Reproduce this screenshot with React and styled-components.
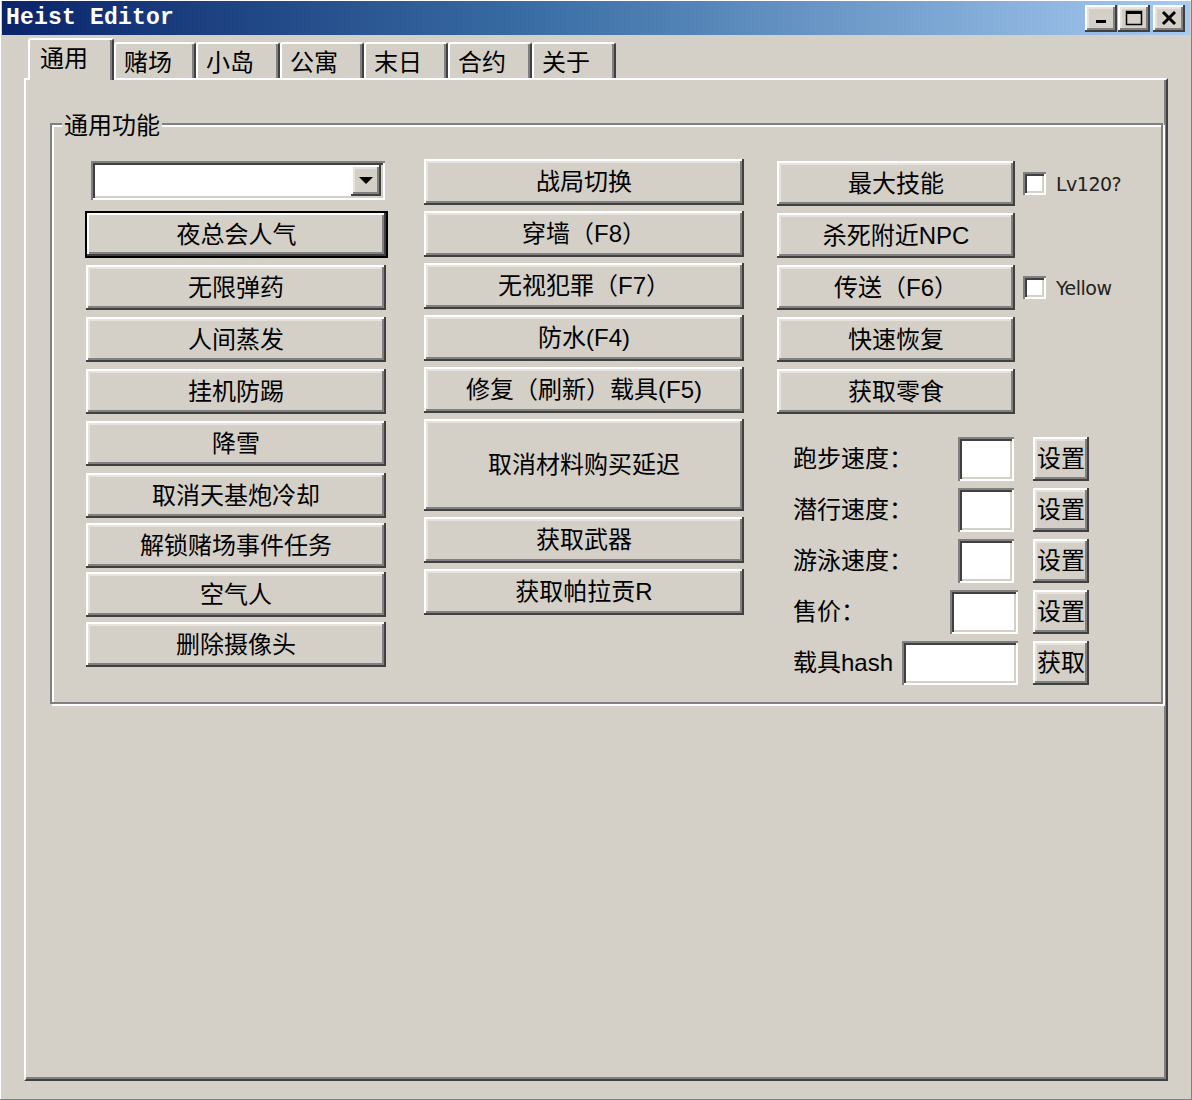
import styled, { createGlobalStyle, css } from "styled-components";

const GlobalStyle = createGlobalStyle`
  html, body {
    margin: 0;
    padding: 0;
    background: #d4d0c8;
  }
  body {
    font-family: "Liberation Sans", "Noto Sans CJK SC", sans-serif;
    color: #000;
  }
`;

const raised = css`
  box-shadow:
    inset -2px -2px 0 #404040,
    inset 2px 2px 0 #ffffff,
    inset -4px -4px 0 #808080,
    inset 4px 4px 0 #e6e3dd;
`;

const sunken = css`
  box-shadow:
    inset 2px 2px 0 #808080,
    inset -2px -2px 0 #ffffff,
    inset 4px 4px 0 #404040,
    inset -4px -4px 0 #d4d0c8;
`;

const Window = styled.div`
  width: 1192px;
  height: 1100px;
  box-sizing: border-box;
  padding: 1px 2px 0 2px;
  display: flex;
  flex-direction: column;
  background: #d4d0c8;
  box-shadow: inset -1px -1px 0 #808080, inset 1px 1px 0 #ffffff;
`;

const TitleBar = styled.div`
  height: 34px;
  display: flex;
  align-items: center;
  justify-content: space-between;
  padding: 0 5px 0 4px;
  background: linear-gradient(to right, #0a246a 0%, #3a6ea5 45%, #a6caf0 100%);
`;

const Title = styled.span`
  font-family: "Liberation Mono", monospace;
  font-weight: bold;
  font-size: 23px;
  color: #fff;
  letter-spacing: 0.2px;
`;

const Caption = styled.div`
  display: flex;
  align-items: center;
`;

const CapButton = styled.div`
  width: 32px;
  height: 27px;
  box-sizing: border-box;
  margin-left: ${p => p.$gap || 1}px;
  display: flex;
  align-items: center;
  justify-content: center;
  background: #d4d0c8;
  ${raised}
`;

const Body = styled.div`
  flex: 1;
  display: flex;
  flex-direction: column;
  padding: 3px 22px 0 22px;
`;

const TabStrip = styled.div`
  height: 40px;
  display: flex;
  align-items: flex-end;
  padding-left: 4px;
`;

const Tab = styled.div`
  box-sizing: border-box;
  width: ${p => p.$w}px;
  height: ${p => (p.$active ? 42 : 36)}px;
  margin-bottom: ${p => (p.$active ? -2 : 0)}px;
  position: relative;
  z-index: ${p => (p.$active ? 1 : 0)};
  padding: ${p => (p.$active ? "5px 0 0 10px" : "5px 0 0 8px")};
  font-family: "Noto Sans CJK SC", sans-serif;
  font-size: 24px;
  line-height: 1;
  background: #d4d0c8;
  border-top: 2px solid #ffffff;
  border-left: 2px solid #ffffff;
  border-right: 2px solid #404040;
  border-radius: 3px 3px 0 0;
  box-shadow: inset -2px 0 0 #808080;
`;

const Panel = styled.div`
  height: 1003px;
  box-sizing: border-box;
  border-top: 2px solid #ffffff;
  border-left: 2px solid #ffffff;
  border-right: 2px solid #404040;
  border-bottom: 2px solid #404040;
  box-shadow: inset -2px -2px 0 #808080;
  padding: 29px 3px 0 24px;
`;

const Group = styled.fieldset`
  margin: 0;
  padding: 0 0 16px 0;
  border: 2px solid #808080;
  box-shadow: inset 2px 2px 0 #ffffff, 2px 2px 0 #ffffff;
`;

const Legend = styled.legend`
  margin-left: 10px;
  padding: 0 2px;
  font-family: "Noto Sans CJK SC", sans-serif;
  font-size: 24px;
  line-height: 30px;
  background: #d4d0c8;
`;

const Columns = styled.div`
  display: flex;
  align-items: flex-start;
  padding: 22px 0 0 33px;
`;

const Column = styled.div`
  display: flex;
  flex-direction: column;
  gap: ${p => p.$gap}px;
  margin-left: ${p => p.$ml || 0}px;
  margin-top: ${p => p.$mt || 0}px;
`;

const Button = styled.div`
  box-sizing: border-box;
  width: ${p => p.$w}px;
  height: ${p => p.$h || 45}px;
  margin-left: ${p => p.$ml || 0}px;
  margin-top: ${p => p.$mt || 0}px;
  display: flex;
  align-items: center;
  justify-content: center;
  font-size: 24px;
  line-height: 1;
  white-space: nowrap;
  background: #d4d0c8;
  ${raised}
  ${p =>
    p.$default &&
    css`
      border: 2px solid #000;
      box-shadow:
        inset -2px -2px 0 #404040,
        inset 2px 2px 0 #ffffff,
        inset -4px -4px 0 #808080;
    `}
`;

const Combo = styled.div`
  box-sizing: border-box;
  width: 294px;
  height: 39px;
  margin-left: 6px;
  margin-bottom: 4px;
  padding: 4px;
  display: flex;
  justify-content: flex-end;
  background: #fff;
  ${sunken}
`;

const DropButton = styled.div`
  width: 30px;
  height: 100%;
  display: flex;
  align-items: center;
  justify-content: center;
  background: #d4d0c8;
  ${raised}
`;

const Arrow = styled.div`
  width: 0;
  height: 0;
  border-left: 7px solid transparent;
  border-right: 7px solid transparent;
  border-top: 7px solid #000;
`;

const Row = styled.div`
  display: flex;
  align-items: center;
`;

const Check = styled.div`
  box-sizing: border-box;
  width: 23px;
  height: 23px;
  margin: 0 10px 0 8px;
  background: #fff;
  ${sunken}
`;

const CheckLabel = styled.span`
  font-family: "DejaVu Sans", sans-serif;
  font-size: 19px;
  letter-spacing: -0.5px;
  color: #222;
`;

const Form = styled.div`
  display: flex;
  flex-direction: column;
  gap: 5px;
  margin: 22px 0 0 16px;
  width: 296px;
`;

const FormRow = styled.div`
  height: 46px;
  display: flex;
  align-items: center;
`;

const FormLabel = styled.span`
  flex: 1;
  font-size: 24px;
  line-height: 1;
  white-space: nowrap;
`;

const Field = styled.div`
  box-sizing: border-box;
  width: ${p => p.$w}px;
  height: 44px;
  margin-right: ${p => p.$mr}px;
  background: #fff;
  ${sunken}
`;

const leftButtons = [
  { t: "无限弹药" },
  { t: "人间蒸发" },
  { t: "挂机防踢" },
  { t: "降雪" },
  { t: "取消天基炮冷却" },
  { t: "解锁赌场事件任务", mt: -2 },
  { t: "空气人", mt: -3 },
  { t: "删除摄像头", mt: -2 },
];

const midButtons = [
  { t: "战局切换" },
  { t: "穿墙（F8）" },
  { t: "无视犯罪（F7）" },
  { t: "防水(F4)" },
  { t: "修复（刷新）载具(F5)" },
  { t: "取消材料购买延迟", h: 92 },
  { t: "获取武器" },
  { t: "获取帕拉贡R" },
];

const rightButtons = [
  { t: "最大技能", c: "Lv120?" },
  { t: "杀死附近NPC" },
  { t: "传送（F6）", c: "Yellow" },
  { t: "快速恢复" },
  { t: "获取零食" },
];

const formRows = [
  { l: "跑步速度：", w: 56, mr: 19, b: "设置" },
  { l: "潜行速度：", w: 56, mr: 19, b: "设置" },
  { l: "游泳速度：", w: 56, mr: 19, b: "设置" },
  { l: "售价：", w: 68, mr: 15, b: "设置" },
  { l: "载具hash", w: 116, mr: 15, b: "获取" },
];

const tabs = [
  { t: "通用", w: 86 },
  { t: "赌场", w: 82 },
  { t: "小岛", w: 84 },
  { t: "公寓", w: 84 },
  { t: "末日", w: 84 },
  { t: "合约", w: 84 },
  { t: "关于", w: 84 },
];

function CaptionButtons() {
  return (
    <Caption>
      <CapButton>
        <svg width="14" height="14" viewBox="0 0 14 14">
          <rect x="2" y="9" width="10" height="3" fill="#000" />
        </svg>
      </CapButton>
      <CapButton>
        <svg width="18" height="16" viewBox="0 0 18 16">
          <rect x="1.5" y="1.5" width="15" height="13" fill="none" stroke="#000" strokeWidth="1.5" />
          <rect x="1" y="1" width="16" height="3" fill="#000" />
        </svg>
      </CapButton>
      <CapButton $gap={3}>
        <svg width="18" height="16" viewBox="0 0 18 16">
          <path d="M3 2 L15 14 M15 2 L3 14" stroke="#000" strokeWidth="3" />
        </svg>
      </CapButton>
    </Caption>
  );
}

export default function App() {
  return (
    <>
      <GlobalStyle />
      <Window>
        <TitleBar>
          <Title>Heist Editor</Title>
          <CaptionButtons />
        </TitleBar>
        <Body>
          <TabStrip>
            {tabs.map((tab, i) => (
              <Tab key={tab.t} $w={tab.w} $active={i === 0}>
                {tab.t}
              </Tab>
            ))}
          </TabStrip>
          <Panel>
            <Group>
              <Legend>通用功能</Legend>
              <Columns>
                <Column $gap={7}>
                  <Combo>
                    <DropButton>
                      <Arrow />
                    </DropButton>
                  </Combo>
                  <Button $w={303} $h={47} $default>
                    夜总会人气
                  </Button>
                  {leftButtons.map(b => (
                    <Button key={b.t} $w={300} $ml={1} $mt={b.mt}>
                      {b.t}
                    </Button>
                  ))}
                </Column>
                <Column $gap={6} $ml={36} $mt={-2}>
                  {midButtons.map(b => (
                    <Button key={b.t} $w={320} $h={b.h || 46}>
                      {b.t}
                    </Button>
                  ))}
                </Column>
                <Column $gap={0} $ml={33}>
                  <Column $gap={7}>
                    {rightButtons.map(b => (
                      <Row key={b.t}>
                        <Button $w={238}>{b.t}</Button>
                        {b.c && (
                          <>
                            <Check />
                            <CheckLabel>{b.c}</CheckLabel>
                          </>
                        )}
                      </Row>
                    ))}
                  </Column>
                  <Form>
                    {formRows.map((r, i) => (
                      <FormRow key={i}>
                        <FormLabel>{r.l}</FormLabel>
                        <Field $w={r.w} $mr={r.mr} />
                        <Button $w={56} $h={44}>
                          {r.b}
                        </Button>
                      </FormRow>
                    ))}
                  </Form>
                </Column>
              </Columns>
            </Group>
          </Panel>
        </Body>
      </Window>
    </>
  );
}
